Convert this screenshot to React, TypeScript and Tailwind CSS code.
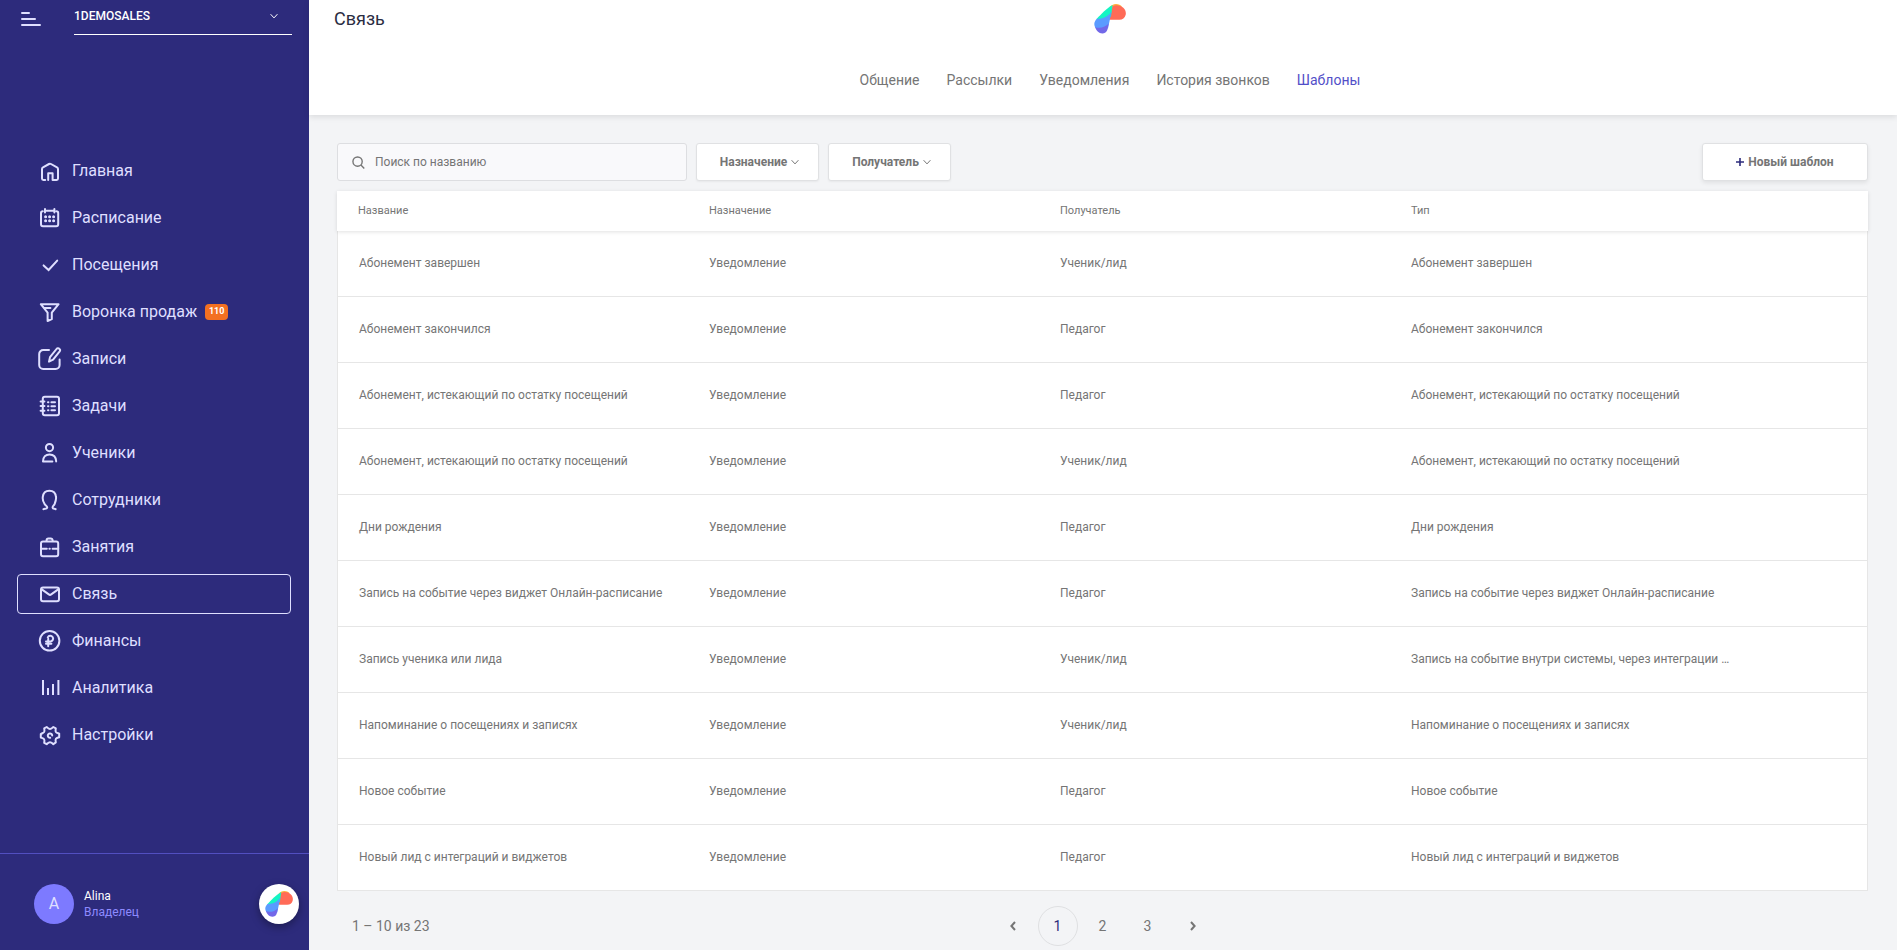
import type { ReactNode } from "react";
import { clsx } from "clsx";

type NavItem = { label: string; icon: ReactNode; badge?: string };

const NAV: NavItem[] = [
  {
    label: "Главная",
    icon: <path d="M7.200 21H5.400A1.400 1.400 0 0 1 4 19.600V10a2 2 0 0 1 1-1.700l6-3.300a2 2 0 0 1 2 0l6 3.300a2 2 0 0 1 1 1.700v9.600a1.400 1.400 0 0 1-1.400 1.400h-4v-6.800h-4.400V21" />,
  },
  {
    label: "Расписание",
    icon: (
      <>
        <path d="M4.800 5.200A1.800 1.800 0 0 0 3 7v11.200a2 2 0 0 0 2 2h13.200a2 2 0 0 0 2-2V7a1.800 1.800 0 0 0-1.800-1.800M8.400 4.800h6.800M7 3v3.400M16.400 3v3.400" />
        <path d="M7.600 10.800h.01M11.600 10.800h.01M15.600 10.800h.01M7.600 14.800h.01M11.600 14.800h.01M15.600 14.800h.01" strokeWidth="3" />
      </>
    ),
  },
  { label: "Посещения", icon: <path d="m5.600 12.400 5 4.600L19.200 7.600" strokeLinejoin="miter" /> },
  {
    label: "Воронка продаж",
    icon: <path d="M6.600 8h5.800M2.800 4.200l6.800 8.400V21l4.200-1.800v-6.600l6.800-8.400z" />,
    badge: "110",
  },
  {
    label: "Записи",
    icon: (
      <>
        <path d="M11 3H5.200a4 4 0 0 0-4 4v11a4 4 0 0 0 4 4h12.400a4 4 0 0 0 4-4v-5.600" />
        <path d="m11 14.600 1-4.400L18.500 2a1.900 1.900 0 0 1 2.800-.2 1.900 1.900 0 0 1 .4 2.600l-6.600 8.200z" />
      </>
    ),
  },
  {
    label: "Задачи",
    icon: (
      <>
        <rect x="4.8" y="2.8" width="16.2" height="18.4" rx="2" />
        <path d="M2.600 7.400h3.800M2.600 12h3.800M2.600 16.800h3.800M10 8.200h.4M13.400 8.200h3.600M10 12.200h.4M13.400 12.200h3.600M10 16.200h.4M13.400 16.200h3.600" />
      </>
    ),
  },
  {
    label: "Ученики",
    icon: (
      <>
        <circle cx="11.500" cy="6.600" r="3.600" />
        <path d="M14.400 20.400H5c0-4.600 2.800-7 6.500-7s6.500 2.400 6.700 7" />
      </>
    ),
  },
  {
    label: "Сотрудники",
    icon: <path d="M5.400 21.200c1-.8 3.600.2 3.800-1.600.2-1.600-1.600-1.600-2.600-3.600C4.800 13.200 4.400 11.600 4.800 9c.4-4 3-6.200 6.600-6.200s6.200 2.200 6.600 6.200c.4 2.600-.4 4.600-1.400 7-.9 1.800-2.200 2-2 3.600.2 1.800 1.800.8 3 1.600" />,
  },
  {
    label: "Занятия",
    icon: (
      <>
        <rect x="3" y="6.600" width="17.200" height="14.600" rx="2" />
        <path d="M8.600 6V5.200a1.800 1.800 0 0 1 1.800-1.800h2.400a1.800 1.800 0 0 1 1.800 1.800V6M3 13.800h5.800M11.400 13.800h.4M14.600 13.800h5.600" />
      </>
    ),
  },
  {
    label: "Связь",
    icon: (
      <>
        <rect x="3" y="5.600" width="18" height="13.600" rx="2" />
        <path d="m3.800 7.400 7 5a2 2 0 0 0 2.400 0l7-5" />
      </>
    ),
  },
  {
    label: "Финансы",
    icon: (
      <>
        <circle cx="11.600" cy="11.800" r="9.800" />
        <path d="M10.200 17.200V9.800M8 12.400h4.600a2.800 2.800 0 1 0-2.800-4M8 14.800h5.400" />
      </>
    ),
  },
  {
    label: "Аналитика",
    icon: <path d="M5 4v15M10 12v7M15 8v11M20.400 4v15" strokeLinecap="butt" />,
  },
  {
    label: "Настройки",
    icon: (
      <>
        <path d="M8.700 4c.9.700 1.700 2 3.300 2s2.400-1.300 3.300-2l2.500 1.400c-.3 1.400-.5 2.700.1 3.600.7 1 1.900 1.100 3.300 1.600v3.600c-1.400.5-2.600.6-3.300 1.600-.6.9-.4 2.200-.1 3.600L15.300 21.200c-.9-.7-1.700-2-3.300-2s-2.400 1.300-3.300 2l-2.500-1.400c.3-1.400.5-2.700-.1-3.600-.7-1-1.900-1.100-3.300-1.600v-3.600C4.200 10.100 5.400 10 6.100 9c.6-.9.400-2.200.1-3.600z" />
        <path d="M14.200 12.600a2.200 2.200 0 1 0-2 2.200" />
      </>
    ),
  },
];

const TABS = ["Общение", "Рассылки", "Уведомления", "История звонков", "Шаблоны"];

const ROWS = [
  ["Абонемент завершен", "Ученик/лид", "Абонемент завершен"],
  ["Абонемент закончился", "Педагог", "Абонемент закончился"],
  ["Абонемент, истекающий по остатку посещений", "Педагог", "Абонемент, истекающий по остатку посещений"],
  ["Абонемент, истекающий по остатку посещений", "Ученик/лид", "Абонемент, истекающий по остатку посещений"],
  ["Дни рождения", "Педагог", "Дни рождения"],
  ["Запись на событие через виджет Онлайн-расписание", "Педагог", "Запись на событие через виджет Онлайн-расписание"],
  ["Запись ученика или лида", "Ученик/лид", "Запись на событие внутри системы, через интеграции …"],
  ["Напоминание о посещениях и записях", "Ученик/лид", "Напоминание о посещениях и записях"],
  ["Новое событие", "Педагог", "Новое событие"],
  ["Новый лид с интеграций и виджетов", "Педагог", "Новый лид с интеграций и виджетов"],
];

function Logo({ className }: { className?: string }) {
  return (
    <svg viewBox="0 0 32 30" className={className} aria-hidden="true">
      <path d="M15 4C17 1 19.500 0 22 0c2.600 0 4.500.9 6 2.400L17 8z" fill="#ffb03a" />
      <path d="M18.500 2.200c4-1.800 8-1 10.800 1.600 2.200 2 3 4.600 2.300 7.200-.8 3-3 4.700-6.200 4.700H15z" fill="#ff6b57" />
      <path d="M18.600 1C13 4.200 7 10 2.600 15l2.800 1.800L17 12.600z" fill="#14f5c4" />
      <path d="M2.800 14.800c5.800.4 12-2.600 14.800-7.600L14 24.600 1.500 24C-.6 21 .2 17.600 2.800 14.800z" fill="#5a9bff" />
      <path d="M1 23.200c5.200 1.400 10.400.2 13.700-3.600l-1.300 6.200c-1.100 4.200-6.800 4.800-9.700 1.700A16 16 0 0 1 1 23.200z" fill="#7268e8" />
    </svg>
  );
}

function Chevron({ className }: { className?: string }) {
  return (
    <svg viewBox="0 0 8 8" className={className} fill="none" stroke="currentColor" aria-hidden="true">
      <path d="M.6 2.200 4 5.900l3.400-3.700" />
    </svg>
  );
}

function Sidebar() {
  return (
    <aside className="flex w-[309px] shrink-0 flex-col bg-[#2d2b7c] text-[#dfdfff]">
      <div className="flex h-[35px] pl-[21px] pr-[17px]">
        <button aria-label="Меню" className="mr-[33px] flex w-5 flex-col gap-1 pt-3">
          <span className="h-0.5 w-[9px] rounded-full bg-[#dfdfff]" />
          <span className="h-0.5 w-[15px] rounded-full bg-[#dfdfff]" />
          <span className="h-0.5 w-5 rounded-full bg-[#dfdfff]" />
        </button>
        <button className="flex flex-1 items-center justify-between border-b border-white pb-0.5 pr-[14px] text-xs font-medium text-white">
          1DEMOSALES
          <Chevron className="size-2" />
        </button>
      </div>

      <nav className="mt-[116px] flex flex-col gap-[7px] pl-[17px] pr-[18px]">
        {NAV.map((item) => (
          <a
            key={item.label}
            href="#"
            className={clsx(
              "flex h-10 items-center rounded border pl-5 text-base",
              item.label === "Связь" ? "border-[#dfdfff]" : "border-transparent",
            )}
          >
            <svg
              viewBox="0 0 24 24"
              className="mr-[10px] size-6 shrink-0 overflow-visible"
              fill="none"
              stroke="currentColor"
              strokeWidth="2"
              strokeLinecap="round"
              strokeLinejoin="round"
              aria-hidden="true"
            >
              {item.icon}
            </svg>
            {item.label}
            {item.badge ? (
              <span className="ml-2 flex h-4 w-[23px] items-center justify-center rounded bg-[#f37021] text-[9px] font-bold text-white">
                {item.badge}
              </span>
            ) : null}
          </a>
        ))}
      </nav>

      <div className="mt-auto flex h-[97px] items-center border-t border-[#524fc0] pl-[34px] pr-[10px] pt-1">
        <span className="flex size-10 items-center justify-center rounded-full bg-[#7d7aff] text-base text-[#dfdfff]">A</span>
        <div className="ml-[10px] text-xs">
          <div className="text-white">Alina</div>
          <div className="text-[#8d8aff]">Владелец</div>
        </div>
        <button
          aria-label="Помощь"
          className="ml-auto flex size-10 items-center justify-center rounded-full bg-white shadow-[0_3px_8px_rgba(0,0,0,0.35)]"
        >
          <Logo className="w-7" />
        </button>
      </div>
    </aside>
  );
}

function FilterButton({ children }: { children: ReactNode }) {
  return (
    <button className="flex h-[38px] w-[123px] items-center justify-center gap-1 rounded-[3px] border border-[#e0e1e3] bg-white pl-1 text-xs font-bold text-[#757575] shadow-xs">
      {children}
      <Chevron className="size-2" />
    </button>
  );
}

function TemplatesTable() {
  return (
    <table className="mt-[10px] w-full table-fixed border-separate border-spacing-0 text-left text-xs text-[#757575]">
      <colgroup>
        <col className="w-[372px]" />
        <col className="w-[351px]" />
        <col className="w-[351px]" />
        <col />
      </colgroup>
      <thead className="relative shadow-[0_1px_4px_rgba(0,0,0,0.12)]">
        <tr className="h-10 bg-white text-[11px]">
          <th className="pl-[21px] font-normal">Название</th>
          <th className="font-normal">Назначение</th>
          <th className="font-normal">Получатель</th>
          <th className="font-normal">Тип</th>
        </tr>
      </thead>
      <tbody>
        {ROWS.map(([name, target, kind], index) => (
          <tr key={index} className="h-[66px] bg-white">
            <td className="border-b border-l border-[#e6e6e6] pb-0.5 pl-[21px]">{name}</td>
            <td className="border-b border-[#e6e6e6] pb-0.5">Уведомление</td>
            <td className="border-b border-[#e6e6e6] pb-0.5">{target}</td>
            <td className="border-b border-r border-[#e6e6e6] pb-0.5">{kind}</td>
          </tr>
        ))}
      </tbody>
    </table>
  );
}

function Pagination() {
  return (
    <div className="grid grid-cols-[1fr_auto_1fr] items-center pt-[15px] text-sm text-[#757575]">
      <span className="pl-[15px]">1 – 10 из 23</span>
      <div className="flex gap-[5px]">
        <button aria-label="Назад" className="flex size-10 items-center justify-center">
          <svg viewBox="0 0 6 10" className="h-[10px]" fill="none" stroke="currentColor" strokeWidth="2">
            <path d="M5 1 1.400 5 5 9" />
          </svg>
        </button>
        {["1", "2", "3"].map((page) => (
          <button
            key={page}
            className={clsx("size-10 rounded-full", page === "1" && "border border-[#dfe0e2] text-[#2d2b7c]")}
          >
            {page}
          </button>
        ))}
        <button aria-label="Вперёд" className="flex size-10 items-center justify-center">
          <svg viewBox="0 0 6 10" className="h-[10px]" fill="none" stroke="currentColor" strokeWidth="2">
            <path d="m1 1 3.600 4L1 9" />
          </svg>
        </button>
      </div>
    </div>
  );
}

export default function App() {
  return (
    <div className="flex min-h-screen bg-[#f3f4f6] font-[Roboto,sans-serif]">
      <Sidebar />
      <div className="min-w-0 flex-1">
        <header className="h-[115px] bg-white pl-[25px] pr-[11px] shadow-[0_2px_6px_rgba(0,0,0,0.1)]">
          <div className="grid h-[38px] grid-cols-[1fr_auto_1fr] items-center">
            <h1 className="text-lg text-[#2b2d42]">Связь</h1>
            <Logo className="w-8" />
          </div>
          <nav className="flex justify-center gap-[27px] pt-8 text-sm leading-5 text-[#757575]">
            {TABS.map((tab) => (
              <a key={tab} href="#" className={clsx(tab === "Шаблоны" && "text-[#524fc8]")}>
                {tab}
              </a>
            ))}
          </nav>
        </header>

        <main className="pl-7 pr-[29px] pt-7">
          <div className="flex items-center gap-[9px]">
            <label className="flex h-[38px] w-[350px] items-center gap-[10px] rounded-[3px] border border-[#dddee1] bg-[#f9f9fb] px-[14px] text-[#757575]">
              <svg viewBox="0 0 14 14" className="size-[13px]" fill="none" stroke="currentColor" strokeWidth="1.500" aria-hidden="true">
                <circle cx="6" cy="6" r="5" />
                <path d="m9.600 9.800 3.600 3.600" />
              </svg>
              <input
                type="text"
                aria-label="Поиск по названию"
                placeholder="Поиск по названию"
                className="min-w-0 flex-1 bg-transparent text-xs outline-none placeholder:text-[#757575]"
              />
            </label>
            <FilterButton>Назначение</FilterButton>
            <FilterButton>Получатель</FilterButton>
            <button className="ml-auto flex h-[38px] w-[166px] items-center justify-center gap-1 rounded-[3px] border border-[#e0e1e3] bg-white text-xs font-bold text-[#757575] shadow-[0_2px_4px_rgba(0,0,0,0.08)]">
              <svg viewBox="0 0 8 8" className="size-2" stroke="#2d2b7c" strokeWidth="1.600" aria-hidden="true">
                <path d="M4 0v8M0 4h8" />
              </svg>
              Новый шаблон
            </button>
          </div>
          <TemplatesTable />
          <Pagination />
        </main>
      </div>
    </div>
  );
}
